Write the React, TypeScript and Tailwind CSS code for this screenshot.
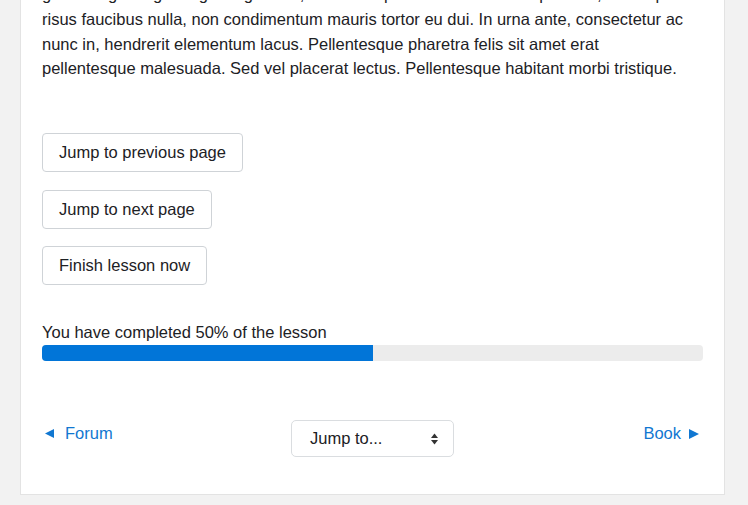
export default function App() {
  return (
    <div className="h-[505px] overflow-hidden bg-[#f2f2f2] px-[20px] font-['Liberation_Sans',Arial,sans-serif] text-[16.5px] leading-[1.5] text-[#1d2125]">
      <div className="w-[705px] border border-t-0 border-[#e3e3e3] bg-white px-[21px] pb-[37px]">
        {/* Lesson page content */}
        <p className="-mt-[18px] w-[661px]">
          gravida ligula eget augue dignissim, vel consequat massa. Aenean quis erat, et semper
          <br />
          risus faucibus nulla, non condimentum mauris tortor eu dui. In urna ante, consectetur ac
          <br />
          nunc in, hendrerit elementum lacus. Pellentesque pharetra felis sit amet erat
          <br />
          pellentesque malesuada. Sed vel placerat lectus. Pellentesque habitant morbi tristique.
        </p>

        {/* Branch buttons */}
        <div className="mt-[52px] flex flex-col items-start gap-[17.5px]">
          {['Jump to previous page', 'Jump to next page', 'Finish lesson now'].map((label) => (
            <button
              key={label}
              className="h-[39px] rounded-[4px] border border-[#cfd3d7] bg-white px-[16px] text-[#1d2125]"
            >
              {label}
            </button>
          ))}
        </div>

        {/* Progress */}
        <div className="mt-[35px]">
          <p>You have completed 50% of the lesson</p>
          <div className="h-[16px] w-full overflow-hidden rounded-[4px] bg-[#ececec]">
            <div className="h-full bg-[#0175d8]" style={{ width: '50%' }} />
          </div>
        </div>

        {/* Activity navigation */}
        <div className="mt-[59px] flex items-start justify-between">
          <a href="#" className="mt-[1px] flex w-[120px] items-center whitespace-nowrap text-[#1177d1]">
            <svg width="9" height="9" viewBox="0 0 9 9" className="ml-[3px] mr-[11px] mt-[1px]">
              <path d="M0 4.5 L9 0 L9 9 Z" fill="#1177d1" />
            </svg>
            Forum
          </a>
          <div className="flex h-[37px] w-[163px] items-center justify-between rounded-[5px] border border-[#dadde0] pl-[18px] pr-[15px]">
            <span className="text-[#1d2125]">Jump to...</span>
            <svg width="7" height="12" viewBox="0 0 7 12" className="mt-[1px]">
              <path d="M0 5 L3.5 0.5 L7 5 Z" fill="#333" />
              <path d="M0 7 L3.5 11.5 L7 7 Z" fill="#333" />
            </svg>
          </div>
          <a href="#" className="mt-[1px] flex w-[120px] items-center justify-end whitespace-nowrap text-[#1177d1]">
            Book
            <svg width="10" height="10" viewBox="0 0 10 10" className="ml-[8px] mr-[4px] mt-[1px]">
              <path d="M0 0 L10 5 L0 10 Z" fill="#1177d1" />
            </svg>
          </a>
        </div>
      </div>
    </div>
  )
}
